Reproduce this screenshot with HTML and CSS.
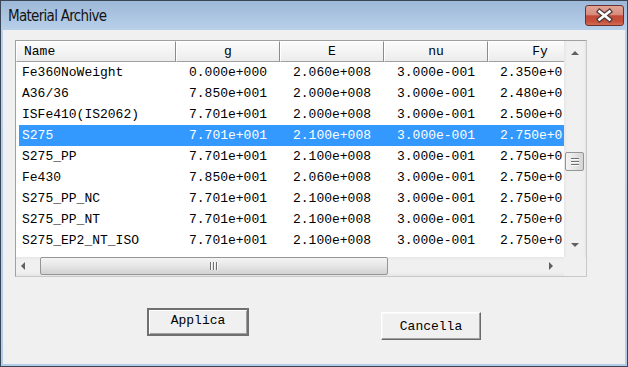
FILE: index.html
```html
<!doctype html>
<html>
 <head>
	<meta charset="UTF-8">
	<title>Material Archive</title>
	<link rel="stylesheet" href="styles.css">
 </head>
 <body>
	<div class="window">
		<div class="titlebar">
			<span class="title">Material Archive</span>
			<button class="close" type="button">
				<svg width="39" height="21" viewBox="0 0 39 21">
					<path d="M14.5 6.5 L24.5 14.5 M24.5 6.5 L14.5 14.5" stroke="#4b3b3b" stroke-width="5" stroke-linecap="square"/>
					<path d="M14.5 6.5 L24.5 14.5 M24.5 6.5 L14.5 14.5" stroke="#ffffff" stroke-width="2.6" stroke-linecap="square"/>
				</svg>
			</button>
		</div>
		<div class="client">
			<div class="listbox">
				<div class="viewport">
					<div class="head">
						<div class="hcell name">Name</div>
						<div class="hcell">g</div>
						<div class="hcell">E</div>
						<div class="hcell">nu</div>
						<div class="hcell">Fy</div>
					</div>
					<div class="row"><span class="name">Fe360NoWeight</span><span>0.000e+000</span><span>2.060e+008</span><span>3.000e-001</span><span class="fy">2.350e+0</span></div>
					<div class="row"><span class="name">A36/36</span><span>7.850e+001</span><span>2.000e+008</span><span>3.000e-001</span><span class="fy">2.480e+0</span></div>
					<div class="row"><span class="name">ISFe410(IS2062)</span><span>7.701e+001</span><span>2.000e+008</span><span>3.000e-001</span><span class="fy">2.500e+0</span></div>
					<div class="row sel"><span class="name">S275</span><span>7.701e+001</span><span>2.100e+008</span><span>3.000e-001</span><span class="fy">2.750e+0</span></div>
					<div class="row"><span class="name">S275_PP</span><span>7.701e+001</span><span>2.100e+008</span><span>3.000e-001</span><span class="fy">2.750e+0</span></div>
					<div class="row"><span class="name">Fe430</span><span>7.850e+001</span><span>2.060e+008</span><span>3.000e-001</span><span class="fy">2.750e+0</span></div>
					<div class="row"><span class="name">S275_PP_NC</span><span>7.701e+001</span><span>2.100e+008</span><span>3.000e-001</span><span class="fy">2.750e+0</span></div>
					<div class="row"><span class="name">S275_PP_NT</span><span>7.701e+001</span><span>2.100e+008</span><span>3.000e-001</span><span class="fy">2.750e+0</span></div>
					<div class="row"><span class="name">S275_EP2_NT_ISO</span><span>7.701e+001</span><span>2.100e+008</span><span>3.000e-001</span><span class="fy">2.750e+0</span></div>
				</div>
				<div class="vscroll">
					<div class="arrow up"></div>
					<div class="vthumb"><i></i><i></i><i></i></div>
					<div class="arrow down"></div>
				</div>
				<div class="hscroll">
					<div class="arrow left"></div>
					<div class="hthumb"><i></i><i></i><i></i></div>
					<div class="arrow right"></div>
				</div>
				<div class="corner"></div>
			</div>
			<div class="buttons">
				<button class="btn default" type="button">Applica</button>
				<button class="btn cancel" type="button">Cancella</button>
			</div>
		</div>
	</div>
 </body>
</html>
```

FILE: styles.css
```css
html,body{margin:0;padding:0;background:#fff}
.window{
	width:628px;height:367px;box-sizing:border-box;
	border:1px solid #3a4656;
	background:linear-gradient(#9db8d8,#b9d1ea 30px,#b3cde8);
	display:flex;flex-direction:column;
}
/*标题栏*/
.titlebar{
	height:29px;flex:none;
	display:flex;justify-content:space-between;align-items:flex-start;
	padding:0 3px 0 7px;
}
.title{
	font-family:"DejaVu Sans Condensed","Liberation Sans",sans-serif;
	font-size:15px;letter-spacing:-0.7px;color:#141414;line-height:31px;
}
.close{
	margin-top:4px;width:39px;height:21px;padding:0;
	border:1px solid #6a3131;border-radius:3px;
	background:linear-gradient(#e3a597,#d78b7b 45%,#c44a37 52%,#c5503b 80%,#d56a52);
	display:flex;align-items:center;justify-content:center;
}
.close svg{display:block;margin:-1px}
.client{
	flex:1;margin:0 2px 2px;background:#f0f0f0;
	font-family:"Liberation Mono","Courier New",monospace;font-size:13px;
}
/*列表框*/
.listbox{
	margin:10px 0 0 12px;width:572px;height:237px;box-sizing:border-box;
	border:1px solid #a0a0a0;border-right-color:#c8c8c8;border-bottom-color:#c8c8c8;
	background:#fff;
	display:grid;grid-template-columns:548px 22px;grid-template-rows:216px 19px;
}
.viewport{overflow:hidden;position:relative}
.head{display:flex;height:21px;width:600px}
.hcell{
	flex:none;width:104px;box-sizing:border-box;height:21px;line-height:19px;
	text-align:center;color:#000;
	background:linear-gradient(#fbfbfb,#ececec);
	border-left:1px solid #fff;border-top:1px solid #fff;
	border-right:1px solid #8c8c8c;border-bottom:1px solid #a0a0a0;
}
.hcell.name{width:160px;text-align:left;padding-left:7px}
.row{
	display:flex;height:21px;line-height:21px;margin-left:3px;width:545px;color:#000;
}
.row span{flex:none;width:104px;text-align:center;white-space:nowrap}
.row span.name{width:157px;text-align:left;padding-left:3px;box-sizing:border-box}
/*最后一列被滚动条挡住，只露出左边一段*/
.row span.fy{width:76px;text-align:left;padding-left:12px}
.row.sel{background:#3399ff;color:#fff}
/*滚动条*/
.vscroll{
	background:linear-gradient(90deg,#e6e6e6,#f0f0f0 3px,#f0f0f0 19px,#e6e6e6);
	position:relative;
}
.hscroll{
	background:linear-gradient(#e6e6e6,#f0f0f0 3px,#f0f0f0 15px,#e6e6e6);
	position:relative;
}
.corner{background:#f0f0f0}
.arrow{position:absolute;width:0;height:0;border:4px solid transparent}
.arrow.up{left:7px;top:10px;border-bottom-color:#606060;border-top-width:0}
.arrow.down{left:7px;top:202px;border-top-color:#606060;border-bottom-width:0}
.arrow.left{left:5px;top:5px;border-right-color:#606060;border-left-width:0}
.arrow.right{left:533px;top:5px;border-left-color:#606060;border-right-width:0}
.vthumb{
	position:absolute;left:1px;top:111px;width:19px;height:19px;box-sizing:border-box;
	border:1px solid #959595;border-radius:2px;
	background:linear-gradient(90deg,#f4f4f4,#e6e6e6 50%,#d4d4d4);
	display:flex;flex-direction:column;align-items:center;justify-content:center;gap:1px;
}
.vthumb i{display:block;width:8px;height:1px;background:#6f6f6f;border-bottom:1px solid #fafafa}
.hthumb{
	position:absolute;left:24px;top:0;width:348px;height:18px;box-sizing:border-box;
	border:1px solid #959595;border-radius:2px;
	background:linear-gradient(#f4f4f4,#e6e6e6 50%,#d2d2d2);
	display:flex;align-items:center;justify-content:center;gap:1px;
}
.hthumb i{display:block;width:1px;height:8px;background:#6f6f6f;border-right:1px solid #fafafa}
/*按钮*/
.buttons{display:flex;align-items:flex-start;padding:31px 0 0 144px}
.btn{
	font-family:"Liberation Mono","Courier New",monospace;font-size:13px;color:#000;
	height:28px;padding:0;background:#f0f0f0;
}
.btn.default{
	width:102px;border:2px solid #707070;
	box-shadow:inset 1px 1px #fff,inset -1px -1px #a0a0a0;
	line-height:22px;padding-bottom:2px;
}
.btn.cancel{
	width:100px;margin:4px 0 0 132px;
	border:1px solid;border-color:#fff #6a6a6a #6a6a6a #fff;
	box-shadow:inset -1px -1px #a0a0a0,inset 1px 1px #f8f8f8;
}
```
